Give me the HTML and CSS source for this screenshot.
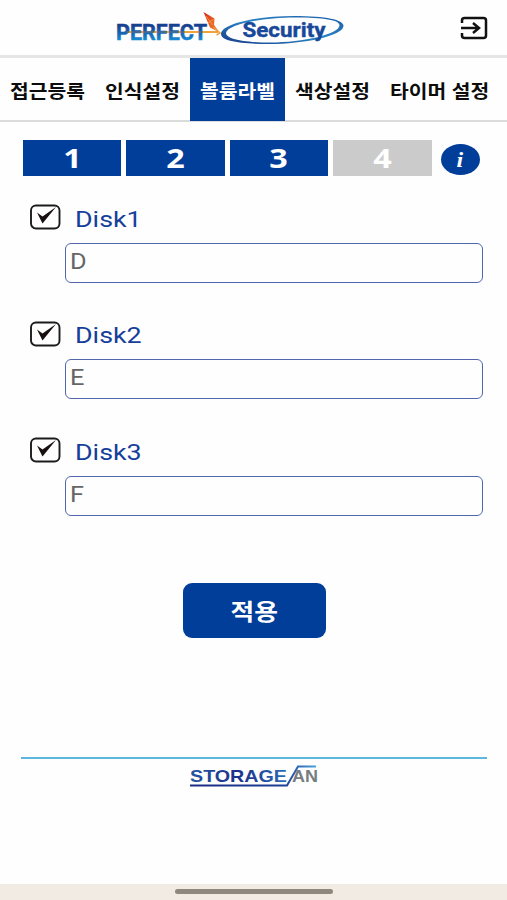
FILE: index.html
```html
<!DOCTYPE html>
<html lang="ko">
<head>
<meta charset="utf-8">
<title>PERFECT Security</title>
<link rel="stylesheet" href="styles.css">
</head>
<body>
<div class="app">
  <header class="header">
    <svg class="brand" width="232" height="40" viewBox="0 0 232 40">
      <defs>
        <linearGradient id="perfect" x1="0" y1="0" x2="0" y2="1"><stop offset=".25" stop-color="#17408f"/><stop offset=".8" stop-color="#1787cf"/></linearGradient>
        <linearGradient id="ring" x1="0" y1="1" x2="1" y2="0"><stop offset="0" stop-color="#173a86"/><stop offset=".5" stop-color="#2a86c6"/><stop offset="1" stop-color="#1e5ca8"/></linearGradient>
        <linearGradient id="kite" x1="0" y1="0" x2="1" y2="1"><stop offset="0" stop-color="#d3281c"/><stop offset=".6" stop-color="#ee6a20"/><stop offset="1" stop-color="#d9381e"/></linearGradient>
      </defs>
      <path d="M12 24H104" stroke="#f0a23c" stroke-width="1.800"/>
      <text class="brand-perfect" x="2" y="31.500" textLength="91" lengthAdjust="spacingAndGlyphs" fill="url(#perfect)" stroke="url(#perfect)">PERFECT</text>
      <path d="M12 24H93" stroke="#f0a23c" stroke-width="1" opacity=".35"/>
      <path d="M89.500 4L100.500 10.500 100 17 105 24 96 19.500Z" fill="url(#kite)"/>
      <path d="M92 8L98.500 17M94 15L99.500 11.500" fill="none" stroke="#f6a15c" stroke-width=".8"/>
      <path d="M99 19L106 25 102.500 27" fill="none" stroke="#f0a23c" stroke-width="1.500"/>
      <path fill-rule="evenodd" fill="url(#ring)" d="M107 26C108 15 145 8 180 8C213 8 230 12 229.500 18C229 28 190 36 155 36C126 36 107 33 107 26ZM112 25C112 31 130 34.500 156 34.500C190 34.500 225 26 225.500 17.500C226 12 210 9.500 181 9.500C145 9.500 113 17 112 25Z"/>
      <text class="brand-security" x="128.500" y="28.500" textLength="83" lengthAdjust="spacingAndGlyphs">Security</text>
    </svg>
    <svg class="exit" width="28" height="24" viewBox="0 0 28 24">
      <path d="M2 7V4.500Q2 2 4.500 2H23.500Q26 2 26 4.500V19.500Q26 22 23.500 22H4.500Q2 22 2 19.500V17M1 12H18M13 7L19 12 13 17" fill="none" stroke="#111" stroke-width="2.500"/>
    </svg>
  </header>
  <nav class="tabs">
    <a class="tab"><span>접근등록</span></a>
    <a class="tab"><span>인식설정</span></a>
    <a class="tab active"><span>볼륨라벨</span></a>
    <a class="tab"><span>색상설정</span></a>
    <a class="tab last"><span>타이머 설정</span></a>
  </nav>
  <main class="content">
    <div class="steps">
      <div class="step"><span>1</span></div>
      <div class="step"><span>2</span></div>
      <div class="step"><span>3</span></div>
      <div class="step off"><span>4</span></div>
      <div class="info"><span>i</span></div>
    </div>
    <section class="disk">
      <div class="label">
        <svg class="check" width="32" height="26" viewBox="0 0 32 26"><rect x="2" y="1.500" width="28.500" height="23" rx="5" fill="none" stroke="#1b1b1b" stroke-width="1.900"/><path d="M8 8.500L13.500 12.500 27 3 13.500 19.500Z" fill="#181010"/></svg>
        <span>Disk1</span>
      </div>
      <div class="field"><span>D</span></div>
    </section>
    <section class="disk">
      <div class="label">
        <svg class="check" width="32" height="26" viewBox="0 0 32 26"><rect x="2" y="1.500" width="28.500" height="23" rx="5" fill="none" stroke="#1b1b1b" stroke-width="1.900"/><path d="M8 8.500L13.500 12.500 27 3 13.500 19.500Z" fill="#181010"/></svg>
        <span>Disk2</span>
      </div>
      <div class="field"><span>E</span></div>
    </section>
    <section class="disk">
      <div class="label">
        <svg class="check" width="32" height="26" viewBox="0 0 32 26"><rect x="2" y="1.500" width="28.500" height="23" rx="5" fill="none" stroke="#1b1b1b" stroke-width="1.900"/><path d="M8 8.500L13.500 12.500 27 3 13.500 19.500Z" fill="#181010"/></svg>
        <span>Disk3</span>
      </div>
      <div class="field"><span>F</span></div>
    </section>
    <button class="apply" type="button"><span>적용</span></button>
  </main>
  <footer class="footer">
    <svg class="maker" width="132" height="26" viewBox="0 0 132 26">
      <defs>
        <linearGradient id="storage" x1="0" y1="0" x2="1" y2="0"><stop offset="0" stop-color="#2456a0"/><stop offset=".5" stop-color="#1c2f8c"/><stop offset="1" stop-color="#2b6db4"/></linearGradient>
        <linearGradient id="swoosh" x1="0" y1="0" x2="1" y2="0"><stop offset="0" stop-color="#1b2a86"/><stop offset=".75" stop-color="#1d3f93"/><stop offset="1" stop-color="#4aa3dc"/></linearGradient>
      </defs>
      <text class="maker-name" x="2" y="16.500" textLength="97" lengthAdjust="spacingAndGlyphs" fill="url(#storage)">STORAGE</text>
      <text class="maker-name" x="104" y="16.500" textLength="26" lengthAdjust="spacingAndGlyphs" fill="#777c80">AN</text>
      <path d="M2 20.500H99L110 1.500H128" fill="none" stroke="url(#swoosh)" stroke-width="2"/>
    </svg>
  </footer>
  <div class="gesture"><div class="handle"></div></div>
</div>
</body>
</html>
```
FILE: styles.css
```css
* { box-sizing: border-box; }
body { margin: 0; background: #fff; font-family: Roboto, "Noto Sans CJK KR", sans-serif; }
.app { width: 507px; height: 900px; display: flex; flex-direction: column; background: #fefefe; }
.header { height: 58px; flex: none; display: flex; align-items: flex-start; padding: 8px 19px 0 114px; border-bottom: 3px solid #e5e5e5; }
.brand-perfect { font: bold 22px "Roboto", sans-serif; stroke-width: .5px; }
.brand-security { font: bold 21px "Roboto", sans-serif; fill: #17489a; stroke: #17489a; stroke-width: .4px; }
.exit { margin: 8px 0 0 auto; }
.tabs { display: flex; height: 64px; flex: none; border-bottom: 2px solid #d9dcda; }
.tab { width: 95px; display: flex; align-items: center; justify-content: center; font: bold 18.500px/28px "Noto Sans CJK KR", sans-serif; color: #0c0c0c; white-space: nowrap; }
.tab span { transform: translateX(.5px) scaleX(1.100); padding-top: 1px; }
.tab.active { background: #003e99; color: #fff; height: 63px; }
.tab.last { width: 127px; padding-right: 8px; }
.content { padding: 18px 24px 0 23px; display: flex; flex-direction: column; }
.steps { display: flex; gap: 5px; height: 36px; }
.step { width: 98.400px; background: #003e99; color: #fff; display: flex; align-items: center; justify-content: center; font: bold 26.500px/36px "Noto Sans", sans-serif; }
.step span { transform: scaleX(1.220); }
.step.off { background: #cbcbcb; }
.info { width: 39px; height: 31px; margin: 4px 0 0 4px; border-radius: 50%; background: #003e99; color: #fff; display: flex; align-items: center; justify-content: center; font: italic bold 20px/30px "Liberation Serif", serif; }
.info span { transform: scaleX(1.200); }
.disk { height: 116.700px; }
.steps + .disk { margin-top: 27.500px; }
.label { display: flex; height: 39px; padding-left: 6px; align-items: flex-start; font-size: 22.200px; line-height: 30px; color: #163f9c; }
.check { flex: none; margin-top: .5px; }
.label span { margin: 0 0 0 14px; transform: scaleX(1.210); transform-origin: left; }
.field { width: 418px; height: 40px; margin-left: 42px; border: 1.500px solid #5266ab; border-radius: 6px; padding: 3px 0 0 4px; font-size: 22px; line-height: 30px; color: #666; }
.field span { display: inline-block; transform: scaleX(1.150); transform-origin: left; }
.apply { width: 143px; height: 55px; margin: 29.500px 0 0 159.500px; padding: 0; border: 0; border-radius: 9px; background: #003e99; color: #fff; font: bold 23px/55px "Noto Sans CJK KR", sans-serif; }
.apply span { display: inline-block; transform: scaleX(1.120); }
.footer { margin: 119px 20px 0 21px; border-top: 2px solid #5db6de; display: flex; justify-content: center; padding-top: 6px; }
.gesture { height: 16px; margin-top: auto; background: #f2ebe4; display: flex; justify-content: center; padding-top: 5px; }
.handle { width: 158px; height: 5px; border-radius: 3px; background: #8e887f; }
.maker-name { font: bold 17px "Liberation Sans", sans-serif; }
```
